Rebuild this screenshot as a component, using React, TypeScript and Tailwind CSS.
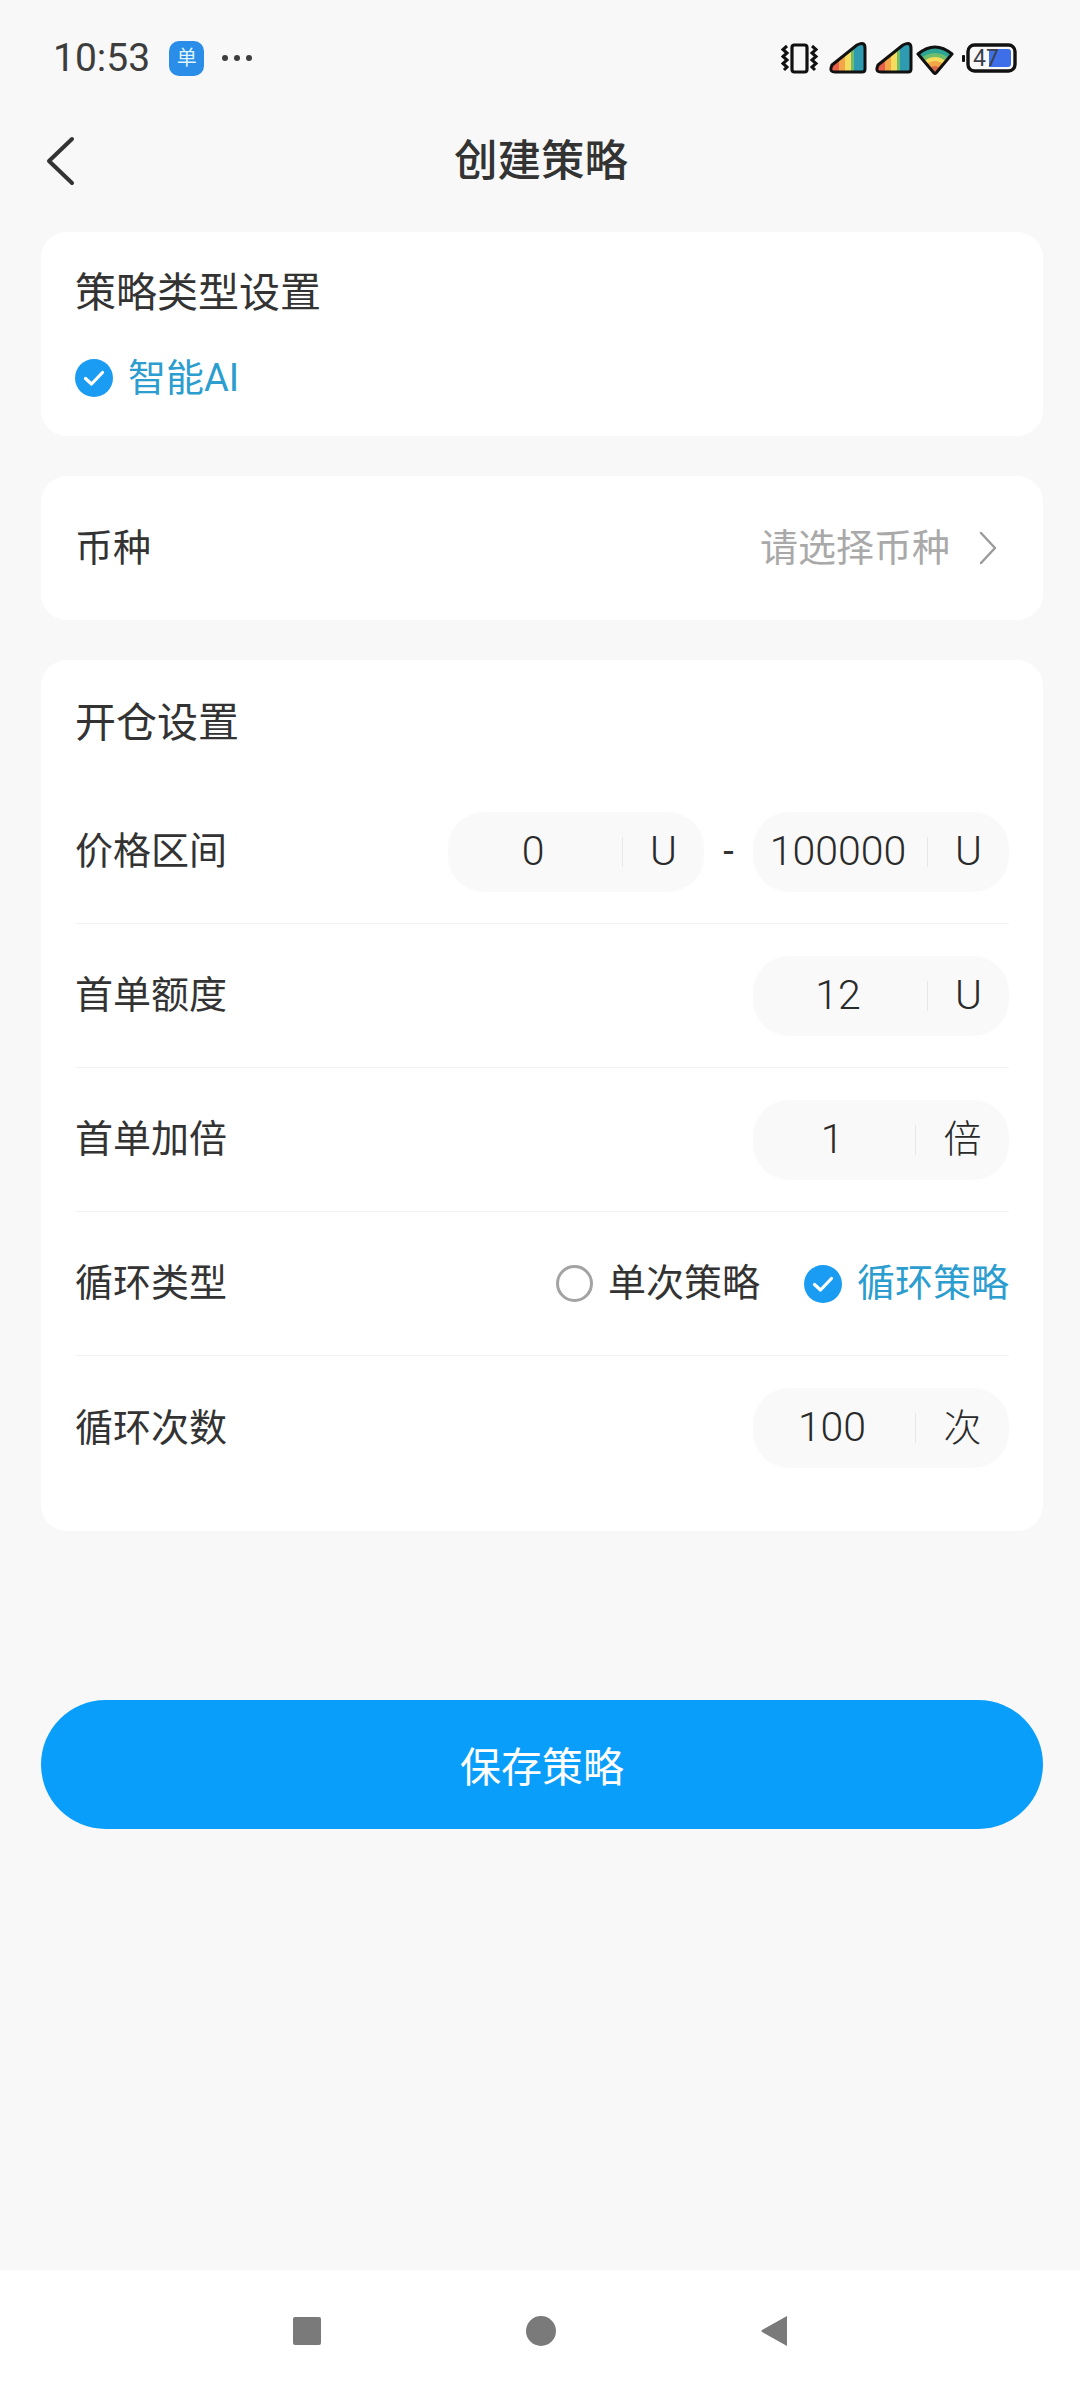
const font = "font-['Roboto','Noto_Sans_CJK_SC',sans-serif]";

function CheckCircle() {
  return (
    <svg width="38" height="38" viewBox="0 0 38 38" className="shrink-0">
      <circle cx="19" cy="19" r="19" fill="#1a9cf2" />
      <path d="M10.5 19.5 L16.5 25 L27.5 13.5" fill="none" stroke="#fff" strokeWidth="3.2" strokeLinecap="round" strokeLinejoin="round" />
    </svg>
  );
}

function StatusIcons() {
  return (
    <svg width="240" height="34" viewBox="0 0 240 34">
      <defs>
        <clipPath id="sig">
          <path d="M2 23 L27 3 Q35 -1 35 6 V27 Q35 30 32 30 H5 Q0 30 1 26 Z" />
        </clipPath>
        <clipPath id="wifi">
          <path d="M1 11 Q18 -3 35 11 L19 30 Q18 31 17 30 Z" />
        </clipPath>
      </defs>
      {/* vibrate */}
      <g fill="none" stroke="#111" strokeWidth="3.2">
        <rect x="11" y="4" width="15" height="27" rx="2.5" />
        <path d="M6 5 L2 8.5 L6 12 L2 15.5 L6 19 L2 22.5 L6 26 L3 29" strokeWidth="3" />
        <path d="M31 5 L35 8.5 L31 12 L35 15.5 L31 19 L35 22.5 L31 26 L34 29" strokeWidth="3" />
      </g>
      <g transform="translate(49 1)">
        <SignalBars />
      </g>
      <g transform="translate(95 1)">
        <SignalBars />
      </g>
      {/* wifi */}
      <g transform="translate(136 2)">
        <g clipPath="url(#wifi)">
          <rect x="0" y="-2" width="36" height="34" fill="#2ca595" />
          <circle cx="18" cy="30" r="20" fill="#6dbd6d" />
          <circle cx="18" cy="30" r="16" fill="#f5dc5c" />
          <circle cx="18" cy="30" r="12" fill="#f3a648" />
          <circle cx="18" cy="30" r="7" fill="#d9694c" />
        </g>
        <path d="M1 11 Q18 -3 35 11 L19 30 Q18 31 17 30 Z" fill="none" stroke="#111" strokeWidth="3" strokeLinejoin="round" />
      </g>
      {/* battery */}
      <g transform="translate(180 0)">
        <rect x="1" y="14" width="3" height="7" rx="1" fill="#111" />
        <rect x="7" y="4" width="47" height="26" rx="6.5" fill="#f8f8f8" stroke="#111" strokeWidth="3.4" />
        <path d="M28 8 H47 Q50 8 50 11 V23 Q50 26 47 26 H28 Z" fill="#3f6fe8" />
        <text x="25" y="25" textAnchor="middle" fontFamily="Roboto, sans-serif" fontSize="23" fill="#3a3f4a">47</text>
      </g>
    </svg>
  );
}

function SignalBars() {
  return (
    <g>
      <g clipPath="url(#sig)">
        <rect x="0" y="0" width="9" height="34" fill="#e8604c" />
        <rect x="9" y="0" width="6" height="34" fill="#f3a648" />
        <rect x="15" y="0" width="6" height="34" fill="#f5dc5c" />
        <rect x="21" y="0" width="3" height="34" fill="#6dbd6d" />
        <rect x="24" y="0" width="12" height="34" fill="#2f9bb0" />
      </g>
      <path d="M2 23 L27 3 Q35 -1 35 6 V27 Q35 30 32 30 H5 Q0 30 1 26 Z" fill="none" stroke="#111" strokeWidth="3" strokeLinejoin="round" />
    </g>
  );
}

function UnitPill({ value, unit, narrow }: { value: string; unit: string; narrow?: boolean }) {
  return (
    <div className="flex h-[80px] w-[256px] items-center rounded-[36px] bg-[#f9f9f9] text-[41px] font-light text-[#2a2a2a]">
      <div className={narrow ? "w-[158px] text-center" : "w-[170px] text-center"}>{value}</div>
      <div className="ml-[4px] h-[30px] w-px bg-[#e8e8e8]" />
      <div className={narrow ? "flex-1 text-center text-[38px]" : "flex-1 text-center"}>{unit}</div>
    </div>
  );
}

function Row({ label, children, last }: { label: string; children: React.ReactNode; last?: boolean }) {
  return (
    <div className={last ? "flex h-[144px] items-center justify-between" : "flex h-[144px] items-center justify-between border-b border-[#f3f3f3]"}>
      <span className="text-[38px] text-[#333]">{label}</span>
      {children}
    </div>
  );
}

export default function App() {
  return (
    <div className={`${font} flex h-[2400px] w-[1080px] flex-col bg-[#f8f8f8]`}>
      {/* status bar */}
      <div className="flex h-[116px] items-center justify-between pl-[53px] pr-[59px]">
        <div className="flex items-center">
          <span className="text-[39px] leading-none text-[#3d3d3d]">10:53</span>
          <div className="ml-[19px] flex h-[35px] w-[35px] items-center justify-center rounded-[10px] bg-[#2a8de8] text-[20px] leading-none text-[#dff4ff]">单</div>
          <div className="ml-[18px] flex gap-[6px]">
            <div className="h-[6px] w-[6px] rounded-full bg-[#3d3d3d]" />
            <div className="h-[6px] w-[6px] rounded-full bg-[#3d3d3d]" />
            <div className="h-[6px] w-[6px] rounded-full bg-[#3d3d3d]" />
          </div>
        </div>
        <StatusIcons />
      </div>

      {/* header */}
      <div className="relative flex h-[90px] items-center justify-center">
        <svg width="30" height="50" viewBox="0 0 30 50" className="absolute left-[46px] top-[20px]">
          <path d="M26 3 L3 25 L26 47" fill="none" stroke="#333" strokeWidth="4" strokeLinecap="round" strokeLinejoin="round" />
        </svg>
        <h1 className="pl-[2px] pt-[2px] text-[43.5px] font-medium text-[#333]">创建策略</h1>
      </div>

      <div className="mt-[26px] flex flex-col gap-[40px] pl-[41px] pr-[37px]">
        <section className="h-[204px] rounded-[26px] bg-white pl-[34px] pr-[34px] pt-[33px]">
          <div className="text-[41px] leading-[56px] text-[#333]">策略类型设置</div>
          <div className="mt-[35px] flex items-center gap-[15px]">
            <CheckCircle />
            <span className="text-[38px] leading-[44px] text-[#2b9dcf]">智能AI</span>
          </div>
        </section>

        <section className="flex h-[144px] items-center justify-between rounded-[26px] bg-white pl-[34px] pr-[45px]">
          <span className="text-[38px] text-[#333]">币种</span>
          <div className="flex items-center gap-[28px]">
            <span className="text-[38px] text-[#a9a9a9]">请选择币种</span>
            <svg width="20" height="34" viewBox="0 0 20 34">
              <path d="M3 2 L17 17 L3 32" fill="none" stroke="#9a9a9a" strokeWidth="2.4" strokeLinecap="round" strokeLinejoin="round" />
            </svg>
          </div>
        </section>

        <section className="h-[871px] rounded-[26px] bg-white pl-[34px] pr-[34px]">
          <div className="flex h-[120px] items-center pt-[8px] text-[41px] text-[#333]">开仓设置</div>
          <Row label="价格区间">
            <div className="flex items-center text-[38px] text-[#333]">
              <UnitPill value="0" unit="U" />
              <span className="w-[49px] text-center">-</span>
              <UnitPill value="100000" unit="U" />
            </div>
          </Row>
          <Row label="首单额度">
            <UnitPill value="12" unit="U" />
          </Row>
          <Row label="首单加倍">
            <UnitPill value="1" unit="倍" narrow />
          </Row>
          <Row label="循环类型">
            <div className="flex items-center text-[38px]">
              <div className="h-[37px] w-[37px] rounded-full border-[3px] border-[#a3a3a3]" />
              <span className="ml-[15px] text-[#333]">单次策略</span>
              <div className="ml-[44px]">
                <CheckCircle />
              </div>
              <span className="ml-[15px] text-[#2b9dcf]">循环策略</span>
            </div>
          </Row>
          <Row label="循环次数" last>
            <UnitPill value="100" unit="次" narrow />
          </Row>
        </section>

        <button className="mt-[129px] h-[129px] rounded-full bg-[#0a9efb] pt-[9px] text-[41px] text-white">保存策略</button>
      </div>

      {/* nav bar */}
      <div className="mt-auto flex h-[130px] items-center justify-center gap-[205px] bg-white pb-[8px] pr-[1px]">
        <div className="h-[28px] w-[28px] rounded-[2px] bg-[#7a7a7a]" />
        <div className="h-[30px] w-[30px] rounded-full bg-[#7a7a7a]" />
        <svg width="26" height="30" viewBox="0 0 26 30">
          <path d="M26 0 V30 L1 16 Q0 15 1 14 Z" fill="#7a7a7a" />
        </svg>
      </div>
    </div>
  );
}
